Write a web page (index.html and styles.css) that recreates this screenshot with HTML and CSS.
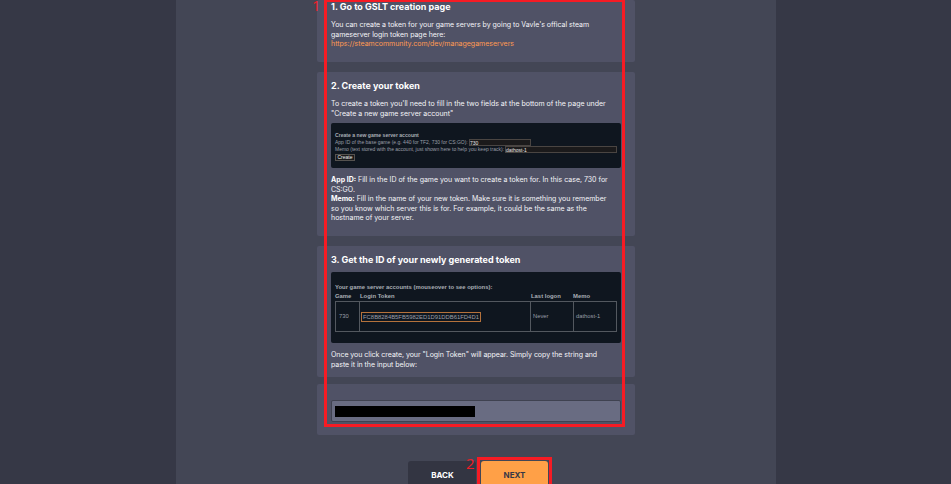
FILE: index.html
```
<!DOCTYPE html>
<html lang="en">
<head>
<meta charset="utf-8">
<title>GSLT setup</title>
<link rel="stylesheet" href="styles.css">
</head>
<body>
<main class="page">
  <div class="steps">
    <section class="card card-create">
      <h2>1. Go to GSLT creation page</h2>
      <p>You can create a token for your game servers by going to Vavle's offical steam<br>gameserver login token page here:<br><a>https://steamcommunity.com/dev/managegameservers</a></p>
    </section>
    <section class="card card-fields">
      <h2>2. Create your token</h2>
      <p>To create a token you'll need to fill in the two fields at the bottom of the page under<br>"Create a new game server account"</p>
      <div class="shot shot-form">
        <b>Create a new game server account</b>
        <div class="row"><span class="app-label">App ID of the base game (e.g. 440 for TF2, 730 for CS:GO):</span><span class="field field-app">730</span></div>
        <div class="row"><span class="memo-label">Memo (text stored with the account, just shown here to help you keep track):</span><span class="field field-memo">dathost-1</span></div>
        <span class="create">Create</span>
      </div>
      <p class="after-shot"><strong>App ID:</strong> Fill in the ID of the game you want to create a token for. In this case, 730 for<br>CS:GO.<br><strong>Memo:</strong> Fill in the name of your new token. Make sure it is something you remember<br>so you know which server this is for. For example, it could be the same as the<br>hostname of your server.</p>
    </section>
    <section class="card card-token">
      <h2>3. Get the ID of your newly generated token</h2>
      <div class="shot shot-table">
        <b>Your game server accounts (mouseover to see options):</b>
        <div class="grid head"><b>Game</b><b>Login Token</b><b>Last logon</b><b>Memo</b></div>
        <div class="grid body"><span>730</span><span class="token-cell"><i class="token">FC8B8284B5FB5982ED1D91DDB61FD4D1</i></span><span>Never</span><span>dathost-1</span></div>
      </div>
      <p>Once you click create, your "Login Token" will appear. Simply copy the string and<br>paste it in the input below:</p>
    </section>
    <section class="card card-input">
      <div class="input"><div class="redacted"></div></div>
    </section>
    <div class="actions"><div class="btn back">BACK</div><div class="btn next">NEXT</div></div>
  </div>
</main>
<div class="mark mark-steps"></div>
<div class="mark mark-next"></div>
<span class="num num-one">1</span>
<span class="num num-two">2</span>
</body>
</html>
```

FILE: styles.css
```
* { box-sizing: border-box; }
body { margin: 0; width: 951px; height: 484px; overflow: hidden; position: relative; background: #363846; font-family: Inter, sans-serif; color: #f4f4f8; }
.page { width: 600px; height: 484px; margin-left: 176px; background: #434655; overflow: hidden; }
.steps { width: 318px; margin-left: 141px; }
.card { background: #505266; border-radius: 2px; padding: 0 14px; white-space: nowrap; }
.card-create { height: 62px; padding-top: 1px; }
.card-fields { height: 164px; margin-top: 10px; padding-top: 8px; }
.card-token { height: 131px; margin-top: 10px; padding-top: 8px; }
.card-input { height: 51px; margin-top: 7px; padding-top: 16px; }
h2 { margin: 0; font-size: 9px; line-height: 12px; font-weight: 700; color: #fff; }
p { margin: 7px 0 0; font-size: 7px; line-height: 9.5px; }
.card-create p { letter-spacing: -0.025px; }
.card-token p { letter-spacing: -0.035px; }
a { color: #ff9a52; letter-spacing: 0; }
strong { color: #fff; }
.shot { width: 290px; background: #0f161f; border-radius: 2px; font-family: "Liberation Sans", sans-serif; color: #9a9fa7; line-height: 7px; overflow: hidden; }
.shot b { display: block; color: #a9aeb5; }
.shot-form { height: 45px; margin-top: 5px; padding: 9px 4px 0; font-size: 5px; }
.shot-form b { font-size: 5.1px; }
.after-shot { margin-top: 7px; }
.row { display: flex; height: 7px; }
.row + .row { height: 8px; }
.app-label { width: 134px; }
.memo-label { width: 170px; }
.field { height: 7px; line-height: 6px; background: #1b1a1b; border: 1px solid #4a4542; color: #e8e8e8; }
.field-app { width: 62px; }
.field-memo { width: 112px; }
.create { display: block; width: 20px; height: 7px; line-height: 5px; border: 1px solid #55524f; background: #1b1a1b; color: #f0f0f0; text-align: center; }
.shot-table { height: 71px; margin-top: 6px; padding: 12px 4px 0; font-size: 5.8px; }
.shot-table b { font-size: 5.9px; }
.grid { display: grid; grid-template-columns: 24px 171px 43px 44px; }
.head { height: 9px; line-height: 9px; margin-top: 1px; }
.head b:nth-child(n+2) { padding-left: 1px; }
.head b:last-child { padding-left: 0; }
.body { height: 31px; border: 1px solid #53585f; border-left: 0; }
.body span { display: flex; align-items: center; border-left: 1px solid #53585f; padding-left: 3px; }
.body span:nth-child(n+3) { padding-left: 2px; }
.body .token-cell { padding-left: 1px; }
.token { font-style: normal; width: 120px; height: 10px; line-height: 8px; border: 1px solid #b4713b; padding-left: 1px; font-size: 5.9px; }
.input { width: 290px; height: 22px; padding: 5px 4px; background: #696c82; border: 1px solid #3f4250; border-radius: 2px; }
.redacted { width: 140px; height: 11px; margin-left: -1px; background: #000; }
.actions { display: flex; gap: 5px; margin: 26px 0 0 91px; }
.btn { height: 34px; border-radius: 3px; font-size: 8px; line-height: 28px; font-weight: 700; text-align: center; }
.back { width: 68px; background: #333542; color: #fff; padding-left: 1px; }
.next { width: 67px; background: #ffa047; color: #363846; }
.mark { position: absolute; border: 3px solid #f61b24; }
.mark-steps { left: 324px; top: 0; width: 301px; height: 427px; border-top-width: 2px; }
.mark-next { left: 477px; top: 457px; width: 75px; height: 40px; }
.num { position: absolute; font-family: "Open Sans", sans-serif; font-size: 15px; line-height: 16px; color: #f01e28; }
.num-one { left: 312px; top: -3px; }
.num-two { left: 466px; top: 455px; }
```
